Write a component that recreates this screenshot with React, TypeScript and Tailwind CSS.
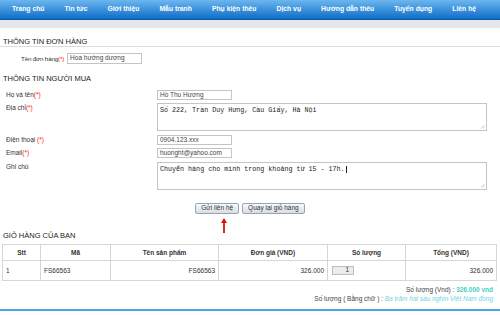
import React from "react";

const navItems = [
  "Trang chủ",
  "Tin tức",
  "Giới thiệu",
  "Mẫu tranh",
  "Phụ kiện thêu",
  "Dịch vụ",
  "Hướng dẫn thêu",
  "Tuyển dụng",
  "Liên hệ",
];

function Req() {
  return <span className="text-[#ff1a1a]">(*)</span>;
}

function Field({ value, w = "w-[75px]", h = "h-[10px]" }: { value: string; w?: string; h?: string }) {
  return (
    <div className={`${w} ${h} border border-[#c4c4c4] bg-white pl-[2px] flex items-center text-[6.5px] text-[#444] leading-none whitespace-nowrap`}>
      {value}
    </div>
  );
}

function Area({ value, caret }: { value: string; caret?: boolean }) {
  return (
    <div className="relative w-[330px] h-[28px] border border-[#c4c4c4] bg-white pl-[2px] pt-[2px] font-['Liberation_Mono',monospace] text-[6.7px] leading-[8px] text-[#222]">
      {value}
      {caret && <span className="inline-block w-px h-[7px] bg-[#222] align-middle ml-px" />}
      <svg className="absolute right-[1px] bottom-[1px]" width="5" height="5" viewBox="0 0 5 5">
        <path d="M4.5 1 L1 4.5 M4.5 3 L3 4.5" stroke="#b8b8b8" strokeWidth="0.7" />
      </svg>
    </div>
  );
}

function Row({ label, children }: { label: React.ReactNode; children: React.ReactNode }) {
  return (
    <div className="flex items-start pl-[3px]">
      <div className="w-[151px] text-[6.5px] leading-[10px] text-[#333] whitespace-nowrap">{label}</div>
      {children}
    </div>
  );
}

function Btn({ children }: { children: React.ReactNode }) {
  return (
    <div className="h-[11px] px-[5px] flex items-center rounded-[2px] border border-[#8ea6c6] bg-gradient-to-b from-[#fafafa] to-[#dcdcdc] text-[6.5px] text-[#333] leading-none whitespace-nowrap">
      {children}
    </div>
  );
}

export default function App() {
  return (
    <div className="w-[500px] h-[315px] bg-white overflow-hidden font-['Liberation_Sans',Arial,sans-serif]">
      <div className="h-[20px] bg-gradient-to-b from-[#6db6ee] via-[#3a92dc] to-[#0b6cc6] border-b border-[#0a5aa8] flex items-center pl-[12px] gap-[20px] text-[6.8px] font-bold text-white">
        {navItems.map((n) => (
          <span key={n}>{n}</span>
        ))}
      </div>
      <div className="h-[8px] bg-[#e6e6ea]" />

      <div className="pl-[3px]">
        <div className="pt-[9px] leading-[9px] text-[7.5px] text-[#222] uppercase">Thông tin đơn hàng</div>
      </div>
      <div className="h-px bg-[#dcdcdc]" />

      <div className="pl-[3px]">
        <div className="mt-[6px] flex items-center gap-[3px] pl-[18px]">
          <div className="text-[6.2px] tracking-[-0.15px] text-[#333] whitespace-nowrap">
            Tên đơn hàng<Req />
          </div>
          <Field value="Hoa hướng dương" h="h-[11px]" />
        </div>

        <div className="mt-[10px] leading-[9px] text-[7.5px] text-[#222] uppercase">Thông tin người mua</div>

        <div className="mt-[7px]">
          <Row label={<>Họ và tên<Req /></>}>
            <Field value="Hồ Thu Hương" />
          </Row>
        </div>
        <div className="mt-[3px]">
          <Row label={<>Địa chỉ<Req /></>}>
            <Area value="Số 222, Trần Duy Hưng, Cầu Giấy, Hà Nội" />
          </Row>
        </div>
        <div className="mt-[4px]">
          <Row label={<>Điện thoại <Req /></>}>
            <Field value="0904.123.xxx" />
          </Row>
        </div>
        <div className="mt-[3px]">
          <Row label={<>Email<Req /></>}>
            <Field value="huonght@yahoo.com" />
          </Row>
        </div>
        <div className="mt-[4px]">
          <Row label="Ghi chú">
            <Area value="Chuyển hàng cho mình trong khoảng từ 15 - 17h." caret />
          </Row>
        </div>

        <div className="relative mt-[13px] flex justify-center gap-[3px] pr-[3px]">
          <Btn>Gửi liên hệ</Btn>
          <Btn>Quay lại giỏ hàng</Btn>
          <svg className="absolute left-[218px] top-[15px]" width="6" height="16" viewBox="0 0 6 16">
            <path d="M3 0 L6 5 L3.9 5 L3.9 15 L2.1 15 L2.1 5 L0 5 Z" fill="#e01010" />
          </svg>
        </div>

        <div className="mt-[17px] leading-[9px] text-[7.5px] text-[#222] uppercase">Giỏ hàng của bạn</div>
      </div>

      <div className="px-[2px] mt-[4px]">
        <table className="w-[495px] border-collapse text-[6.5px] text-[#333]">
          <thead>
            <tr className="h-[16px] font-bold">
              <th className="w-[38px] border border-[#d6d6d6] font-bold p-0">Stt</th>
              <th className="w-[70px] border border-[#d6d6d6] font-bold p-0">Mã</th>
              <th className="w-[108px] border border-[#d6d6d6] font-bold p-0">Tên sản phẩm</th>
              <th className="w-[109px] border border-[#d6d6d6] font-bold p-0">Đơn giá (VND)</th>
              <th className="w-[78px] border border-[#d6d6d6] font-bold p-0">Số lượng</th>
              <th className="border border-[#d6d6d6] font-bold p-0">Tổng (VND)</th>
            </tr>
          </thead>
          <tbody>
            <tr className="h-[20px]">
              <td className="border border-[#d6d6d6] pl-[3px]">1</td>
              <td className="border border-[#d6d6d6] pl-[3px]">FS66563</td>
              <td className="border border-[#d6d6d6] text-right pr-[3px]">FS66563</td>
              <td className="border border-[#d6d6d6] text-right pr-[3px]">326.000</td>
              <td className="border border-[#d6d6d6] pl-[4px]">
                <div className="w-[22px] h-[9px] border border-[#bdbdbd] bg-[#ececec] flex items-center justify-end pr-[4px] leading-none">
                  1
                </div>
              </td>
              <td className="border border-[#d6d6d6] text-right pr-[3px]">326.000</td>
            </tr>
          </tbody>
        </table>
      </div>

      <div className="mt-[5px] pr-[7px] flex flex-col items-end text-[6.5px] leading-[8.5px] text-[#444]">
        <div>
          Số lượng (Vnd) : <span className="font-bold text-[#3fcfc2]">326.000 vnd</span>
        </div>
        <div>
          Số lượng ( Bằng chữ ) : <span className="italic text-[#6fd4e4]">Ba trăm hai sáu nghìn Việt Nam đồng</span>
        </div>
      </div>

      <div className="mt-[6px] h-[1.5px] bg-[#48a6e2]" />
    </div>
  );
}
